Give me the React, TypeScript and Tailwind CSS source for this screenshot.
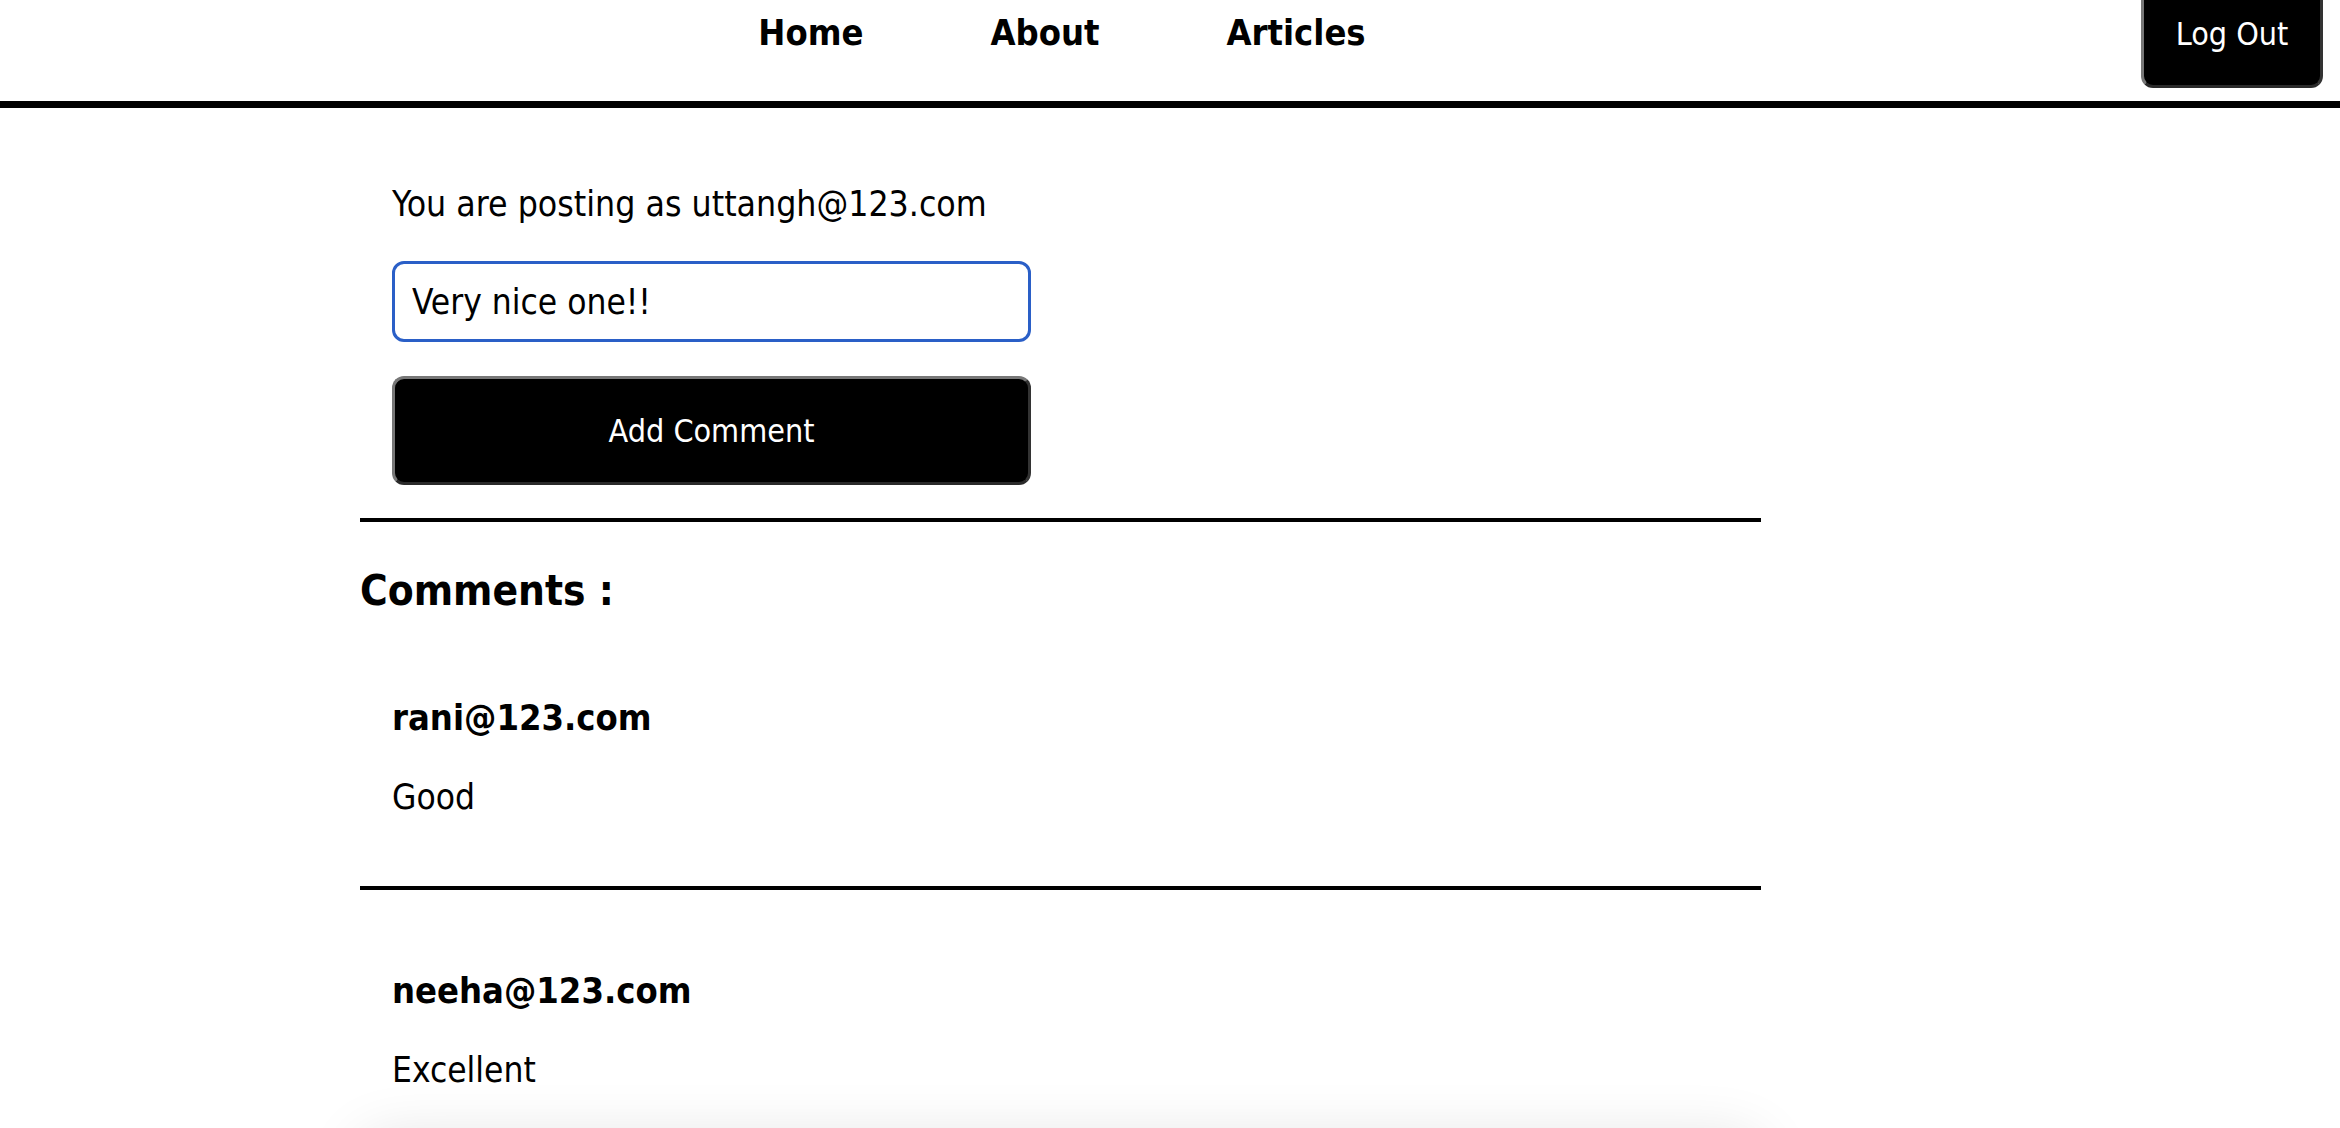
import React, { useState } from 'react';

const font = { fontFamily: '"DejaVu Sans Condensed", "DejaVu Sans", sans-serif' };

const comments = [
  { author: 'rani@123.com', text: 'Good' },
  { author: 'neeha@123.com', text: 'Excellent' },
];

const Navbar = () => (
  <nav className="flex items-start border-b-[7px] border-black h-[108px]">
    <ul className="flex flex-1 justify-center gap-[127px] pt-[11px] pl-[4px] text-[36px] font-bold leading-[44px] text-black">
      <li>Home</li>
      <li>About</li>
      <li>Articles</li>
    </ul>
    <button className="-mt-[12px] ml-[21px] mr-[17px] h-[100px] w-[182px] rounded-[12px] border-[3px] border-t-[#666] border-l-[#777] border-r-[#333] border-b-[#2a2a2a] bg-black pb-[8px] text-[32px] text-white">
      Log Out
    </button>
  </nav>
);

export default function App() {
  const [comment, setComment] = useState('Very nice one!!');

  return (
    <div className="min-h-screen bg-white text-black" style={font}>
      <Navbar />
      <div className="mx-[360px] w-[1401px]">
        <div className="px-[32px] pt-[76px]">
          <p className="text-[35.3px] leading-[40px]">You are posting as uttangh@123.com</p>
          <input
            className="mt-[37px] block h-[81px] w-[639px] rounded-[12px] border-[3px] border-[#2a5fc7] px-[17px] text-[35px] outline-none"
            value={comment}
            onChange={(e) => setComment(e.target.value)}
          />
          <button className="mt-[34px] block h-[109px] w-[639px] rounded-[12px] border-[3px] border-t-[#777] border-l-[#777] border-r-[#333] border-b-[#2a2a2a] bg-black text-[32px] text-white">
            Add Comment
          </button>
        </div>
        <hr className="mt-[33px] border-t-[4px] border-black" />
        <h3 className="pt-[45px] text-[42px] font-bold leading-[48px]">Comments :</h3>
        {comments.map((c, i) => (
          <div key={c.author}>
            <div className="px-[32px]">
              <h4 className={`${i === 0 ? 'pt-[83px]' : 'pt-[81px]'} text-[36px] font-bold leading-[40px]`}>{c.author}</h4>
              <p className="pt-[39px] text-[35px] leading-[40px]">{c.text}</p>
            </div>
            {i === 0 && <hr className="mt-[69px] border-t-[4px] border-black" />}
          </div>
        ))}
        <div className="mt-[48px] h-[200px] rounded-[24px] shadow-[0_0_60px_rgba(0,0,0,0.12)]" />
      </div>
    </div>
  );
}
